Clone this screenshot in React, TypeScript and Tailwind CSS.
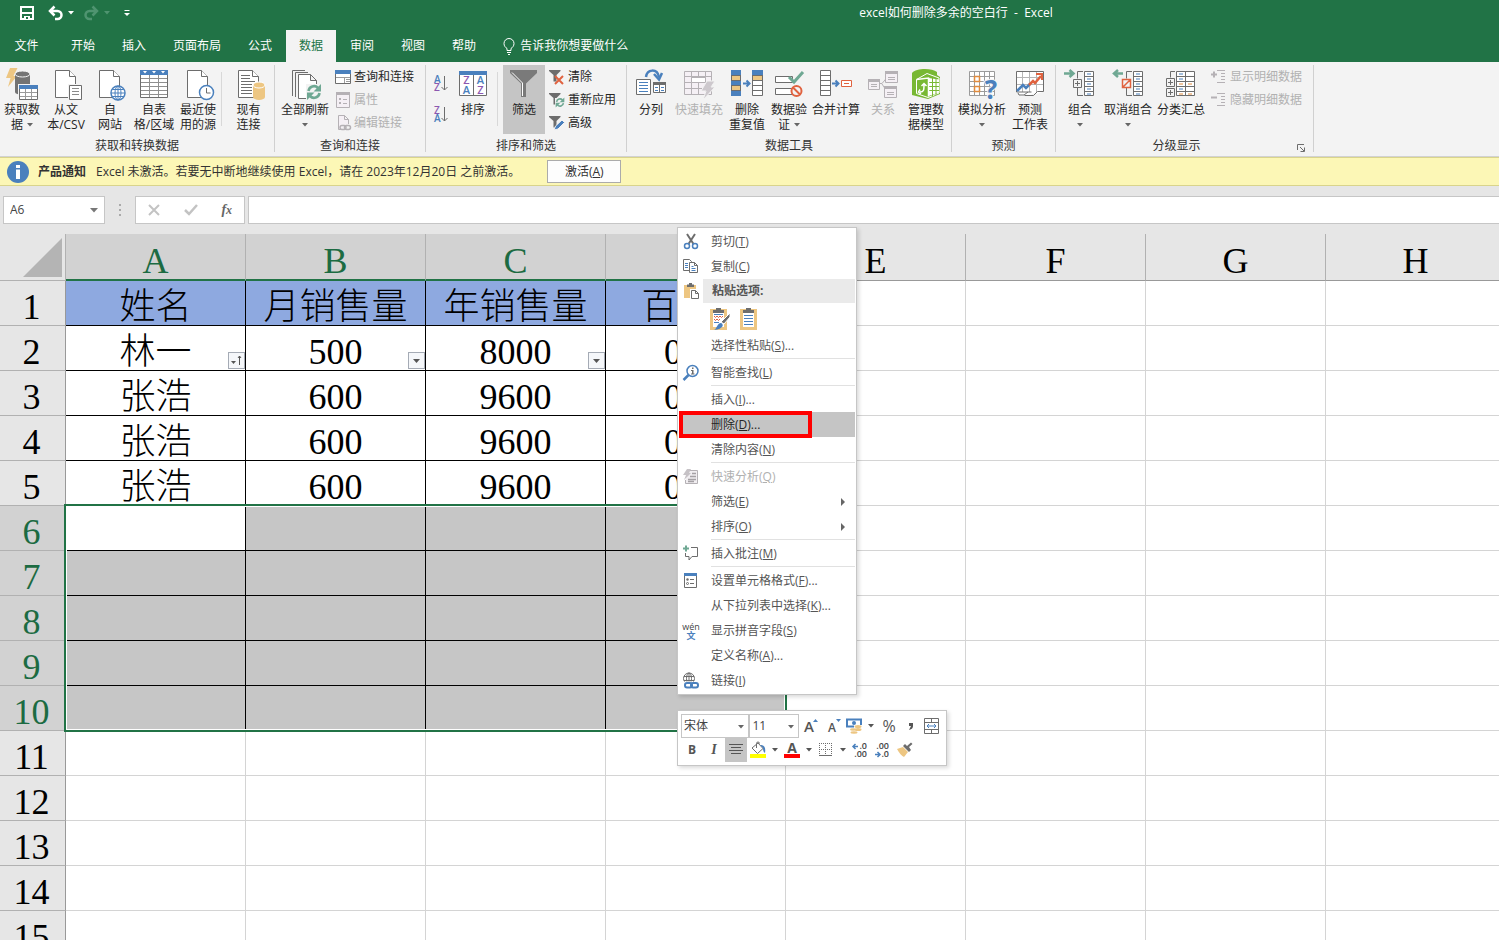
import type { ReactNode } from "react";
import clsx from "clsx";

const GRAY = "#6d6d6d";
const BLUE = "#4a80bd";
const TAN = "#edc682";
const GREEN = "#6fa893";
const RED = "#e0623f";
const PURPLE = "#8c58b0";
const DIM = "#b5b1b5";

/* ---------- icon parts ---------- */

function Svg({ w = 32, h = 32, children }: { w?: number; h?: number; children: ReactNode }) {
  return (
    <svg width={w} height={h} viewBox={`0 0 ${w} ${h}`} fill="none" aria-hidden="true" className="shrink-0 overflow-visible">
      {children}
    </svg>
  );
}

function Page({ x = 5, y = 2 }: { x?: number; y?: number }) {
  return (
    <g transform={`translate(${x} ${y})`} stroke={GRAY} fill="#fff">
      <path d="M.5.5h14l6 6v21H.5z" />
      <path d="M14.5.5v6h6" />
    </g>
  );
}

function Lines({ x, w, ys, color = GRAY }: { x: number; w: number; ys: number[]; color?: string }) {
  return <path d={ys.map((y) => `M${x} ${y + 0.5}h${w}`).join("")} stroke={color} />;
}

function Cylinder({ x, y, w, h, fill, top }: { x: number; y: number; w: number; h: number; fill: string; top: string }) {
  const r = w / 2;
  return (
    <g>
      <path d={`M${x} ${y + 3}v${h - 6}a${r} 3 0 0 0 ${w} 0v${6 - h}z`} fill={fill} />
      <ellipse cx={x + r} cy={y + 3} rx={r} ry="3" fill={fill} stroke={top} />
    </g>
  );
}

function Refresh({ x, y, s = 1 }: { x: number; y: number; s?: number }) {
  return (
    <g transform={`translate(${x} ${y}) scale(${s})`}>
      <path d="M-5.500-1A5.500 5.500 0 0 1 4-4M5.500 1A5.500 5.500 0 0 1-4 4" stroke={GREEN} strokeWidth="2.600" />
      <path d="M7-8v7.500H-.5zM-7 8V.5H.5z" fill={GREEN} />
    </g>
  );
}

function Funnel() {
  return <path d="M0 1h11.500v1L7.500 6v6.500h-3V6L0 2z" fill={GRAY} />;
}

function Caret({ className }: { className?: string }) {
  return (
    <svg width="6" height="4" viewBox="0 0 6 4" aria-hidden="true" className={clsx("shrink-0", className)}>
      <path d="M0 0h6L3 3.500z" fill="currentColor" />
    </svg>
  );
}

const letter = { fontFamily: "Open Sans, sans-serif", fontWeight: 700 };
const plain = { fontFamily: "Open Sans, sans-serif", fontWeight: 600 };

/* ---------- ribbon icons ---------- */

const icons = {
  fetch: (
    <Svg>
      <path d="M4 0h7.500L7.500 8h3.500L2 19l2.500-9H0z" fill={TAN} />
      <Cylinder x={9} y={3} w={15} h={24} fill="#737373" top="#f3f3f3" />
      <path d="M12 16h20v16H12z" fill="#f3f3f3" />
      <path d="M13.500 17.500h18v14h-18z" fill="#fff" stroke={GRAY} />
      <path d="M13 17h19v4H13z" fill={BLUE} />
      <path d="M19.500 21v10M25.500 21v10M14 24.500h17M14 28.500h17" stroke="#9a9a9a" />
    </Svg>
  ),
  csv: (
    <Svg>
      <Page />
      <path d="M18 16h14v16H18z" fill="#f3f3f3" />
      <path d="M19.500 17.500h12v14h-12z" fill="#fff" stroke={GRAY} />
      <Lines x={22} w={7} ys={[20, 23, 26]} color="#8a8a8a" />
    </Svg>
  ),
  web: (
    <Svg>
      <Page />
      <circle cx="24" cy="25" r="7" fill="#fff" stroke={BLUE} strokeWidth="1.500" />
      <ellipse cx="24" cy="25" rx="3" ry="7" stroke={BLUE} />
      <path d="M24 18v14M17 25h14M18.500 21.500h11M18.500 28.500h11" stroke={BLUE} />
    </Svg>
  ),
  table: (
    <Svg>
      <path d="M2.500 2.500h27v27h-27z" fill="#fff" stroke={GRAY} />
      <path d="M2 2h28v5H2z" fill={BLUE} />
      <path d="M5 3h4l-2 2.500zM14 3h4l-2 2.500zM23 3h4l-2 2.500z" fill="#fff" />
      <path d="M11.500 7v22M20.500 7v22M3 10.500h26M3 14.500h26M3 18.500h26M3 22.500h26M3 26.500h26" stroke="#8f8f8f" />
    </Svg>
  ),
  recent: (
    <Svg>
      <Page />
      <circle cx="24.500" cy="24.500" r="7" fill="#fff" stroke={BLUE} strokeWidth="1.500" />
      <path d="M24.500 20v5h4" stroke={GRAY} />
    </Svg>
  ),
  existing: (
    <Svg>
      <Page />
      <Lines x={8} w={9} ys={[7, 10]} />
      <Lines x={8} w={14} ys={[13]} />
      <Lines x={8} w={11} ys={[16, 19, 22, 25]} />
      <Cylinder x={20} y={14} w={12} h={18} fill={TAN} top="#fff" />
    </Svg>
  ),
  refreshAll: (
    <Svg>
      <path d="M3.500 28V2.500H16M6.500 29V4.500H19" stroke={GRAY} />
      <path d="M9.500 30.500v-24h12l6 6v18zM21.500 6.500v6h6" fill="#fff" stroke={GRAY} />
      <path d="M17 16h13v15H17z" fill="#f3f3f3" />
      <Refresh x={25} y={24} />
    </Svg>
  ),
  sort: (
    <Svg>
      <path d="M2.500 3.500h27v24h-27z" fill="#fff" stroke={GRAY} />
      <path d="M2 3h28v4H2z" fill={BLUE} />
      <path d="M16.500 7v21" stroke={GRAY} />
      <g fontSize="11" textAnchor="middle" style={plain}>
        <text x="9.500" y="16" fill={PURPLE}>Z</text>
        <text x="9.500" y="26" fill={BLUE}>A</text>
        <text x="23.500" y="16" fill={BLUE}>A</text>
        <text x="23.500" y="26" fill={PURPLE}>Z</text>
      </g>
    </Svg>
  ),
  filter: (
    <Svg>
      <path d="M2 2h27v3L18 15.500V29h-5V15.500L2 5z" fill="#7a7a7a" />
      <path d="M4 4.500L14.500 15v13" stroke="#fff" />
    </Svg>
  ),
  columns: (
    <Svg>
      <path d="M11 9C12 1 22 0 24 9" stroke={BLUE} strokeWidth="2.500" />
      <path d="M19 6l5 5.500L27 5" stroke={BLUE} strokeWidth="2.500" />
      <path d="M1.500 11.500h14v15h-14z" fill="#fff" stroke={GRAY} />
      <Lines x={4} w={9} ys={[14, 17, 20, 23]} color={BLUE} />
      <path d="M18.500 14.500h12v10h-12z" fill="#fff" stroke={GRAY} />
      <path d="M18 14h13v3H18z" fill={GRAY} />
      <path d="M24.500 17v8" stroke={GRAY} />
      <path d="M20 19.500h3M20 22.500h3M26 19.500h3M26 22.500h3" stroke={BLUE} />
    </Svg>
  ),
  flash: (
    <Svg>
      <path d="M1.500 3.500h27v23h-27z" fill="#f5f0f5" stroke={DIM} />
      <path d="M8.500 4v22M22.500 4v22M2 8.500h26M2 14.500h26M2 20.500h26M15.500 4v4M15.500 15v11" stroke={DIM} />
      <path d="M8.500 9.500h14v5h-14z" fill="#fff" stroke={DIM} />
      <path d="M24 13h8l-4 6h4L20 32l3-9h-5z" fill="#cdc8cd" stroke="#f3f3f3" />
    </Svg>
  ),
  dedupe: (
    <Svg>
      <path d="M.5 2.500h9v25h-9zM21.500 2.500h10v25h-10z" fill="#fff" stroke={GRAY} />
      <path d="M0 2h10v5H0zM0 12h10v5H0zM0 22h10v6H0zM21 2h11v5H21z" fill={BLUE} />
      <path d="M1 7h8v5H1zM1 17h8v5H1zM22 7h9v5h-9z" fill={TAN} />
      <path d="M0 7.500h10M0 12.500h10M0 17.500h10M0 22.500h10M21 7.500h11M21 12.500h11M21 17.500h11M21 22.500h11" stroke={GRAY} />
      <path d="M12 15.500h6M15.500 12.500l3 3-3 3" stroke={BLUE} strokeWidth="2" />
    </Svg>
  ),
  validate: (
    <Svg>
      <path d="M2.500 8.500h17v6h-17zM2.500 20.500h17v6h-17z" fill="#fff" stroke={GRAY} />
      <path d="M16 9l5 5 9-10" stroke={GREEN} strokeWidth="3" />
      <circle cx="23.500" cy="23" r="5" fill="#f3f3f3" stroke={RED} strokeWidth="2" />
      <path d="M20 19.500l7 7" stroke={RED} strokeWidth="2" />
    </Svg>
  ),
  consolidate: (
    <Svg>
      <path d="M.5 2.500h10v25H.5zM.5 7.500h10M.5 12.500h10M.5 17.500h10M.5 22.500h10" fill="#fff" stroke={GRAY} />
      <path d="M12 15.500h6M15.500 12.500l3 3-3 3" stroke={BLUE} strokeWidth="2" />
      <path d="M21.500 12.500h10v6h-10z" fill="#fff" stroke={RED} />
      <path d="M24 15.500h5" stroke={RED} />
    </Svg>
  ),
  relations: (
    <Svg>
      <path d="M12 15.500h3l5-6M15 16l4 6h2" stroke={DIM} />
      <path d="M1.500 11.500h11v10h-11zM18.500 3.500h12v11h-12zM17.500 18.500h12v11h-12z" fill="#f5f0f5" stroke={DIM} />
      <path d="M1 11h12v3H1zM18 3h13v3H18zM17 18h13v3H17z" fill={DIM} />
      <path d="M4 16.500h6M4 18.500h6M21 9.500h7M21 11.500h7M20 24.500h7M20 26.500h7" stroke={DIM} />
    </Svg>
  ),
  model: (
    <Svg>
      <path d="M2 5C6 0 22 0 27 4v3l3 2v17l-12 5L2 27z" fill="#78b833" />
      <path d="M6.500 11.500L17 5.500l12 4.500v15l-11 4.500-11.500-4z" stroke="#fff" />
      <path d="M18.500 10l10.500 1.500v13L18.500 28z" fill="#fff" />
      <path d="M19 14.500h10M19 18.500h10M19 22.500h10M22.500 10v18M26 11v16" stroke="#78b833" />
      <path d="M6.500 11.500l12-1.500v18.500M10 24c4 0 4-2 4-8M11.500 18l2.500-2.500 2.500 2.500M10 21.500L8.500 24l2.500 2" stroke="#fff" strokeWidth="1.500" />
    </Svg>
  ),
  whatIf: (
    <Svg>
      <path d="M3.500 3.500h25v24h-25zM8.500 3v24M13.500 3v24M18.500 3v24M23.500 3v24M3 8.500h25M3 13.500h25M3 18.500h25M3 23.500h25" fill="#fff" stroke="#9b9b9b" />
      <path d="M8.500 8.500h5v5h-5zM8.500 18.500h5v5h-5z" fill="#fff" stroke="#e08b3e" strokeWidth="1.500" />
      <text x="25" y="31" fontSize="26" textAnchor="middle" fill={BLUE} stroke="#f3f3f3" strokeWidth="2" paintOrder="stroke" style={letter}>?</text>
    </Svg>
  ),
  forecast: (
    <Svg>
      <path d="M2.500 3.500h27v20l-5 2h-5l-4 2h-4l-4 1-5-4z" fill="#fff" />
      <path d="M8.500 4v20M15.500 4v20M22.500 4v20M3 9.500h26M3 16.500h26" stroke="#b5b5b5" />
      <path d="M2.500 24V3.500h27v20h-6l-4 4h-9M2.500 24h15M4 25l1 2h5l4-3" stroke={GRAY} />
      <path d="M3 23l6-6 3 3 4-4" stroke={BLUE} strokeWidth="2.500" />
      <path d="M15 17l4-4 2 2 6-7" stroke={RED} strokeWidth="2.500" />
      <path d="M22 6h6v6" stroke={RED} strokeWidth="2" />
    </Svg>
  ),
  group: (
    <Svg>
      <path d="M0 5.500h8M5.500 2l4 3.500-4 3.500" stroke={GREEN} strokeWidth="2.500" />
      <path d="M20.500 3.500h9v24h-9zM20 8.500h10M20 13.500h10M20 18.500h10M20 23.500h10" fill="#fff" stroke={GRAY} />
      <path d="M19 3.500h-5.500v7M13.500 20v7.500H19M9.500 11.500h8v8h-8zM11 15.500h5M13.500 13v5" stroke={GRAY} />
      <path d="M23 6h4M23 11h4M23 16h4M23 21h4M23 26h4" stroke={BLUE} />
    </Svg>
  ),
  ungroup: (
    <Svg>
      <path d="M11 5.500H3M6 2L2 5.500 6 9" stroke={GREEN} strokeWidth="2.500" />
      <path d="M21.500 3.500h9v24h-9zM21 8.500h10M21 13.500h10M21 18.500h10M21 23.500h10" fill="#fff" stroke={GRAY} />
      <path d="M20 3.500h-5.500v7M14.500 20v7.500H20" stroke={GRAY} />
      <path d="M10.500 11.500h8v8h-8zM11 19l7-7" stroke={RED} strokeWidth="1.500" />
      <path d="M24 6h4M24 11h4M24 16h4M24 21h4M24 26h4" stroke={BLUE} />
    </Svg>
  ),
  subtotal: (
    <Svg>
      <path d="M11.500 3.500h18v24h-18zM20.500 4v23M12 8.500h17M12 13.500h17M12 18.500h17M12 23.500h17" fill="#fff" stroke={GRAY} />
      <path d="M10 3.500H5.500v6M1.500 10.500h8v8h-8zM1.500 20.500h8v8h-8zM3 14.500h5M5.500 12v5M3 24.500h5M5.500 22v5" stroke={GRAY} />
      <path d="M14 6h4M14 11h4M14 21h4" stroke={BLUE} />
      <path d="M14 16h4M23 16h4M14 26h4M23 26h4" stroke="#e08b3e" />
    </Svg>
  ),
};

const small = {
  queries: (
    <Svg w={16} h={16}>
      <path d="M.5 1.500h15v13H.5z" fill="#fff" stroke={GRAY} />
      <path d="M0 1h16v4H0z" fill={BLUE} />
      <path d="M9.500 8v6M1 8.500h14M11 10.500h4M11 12.500h4" stroke="#9c9c9c" />
    </Svg>
  ),
  props: (
    <Svg w={16} h={16}>
      <path d="M1.500.5h13v15h-13z" fill="#f5f0f5" stroke={DIM} />
      <path d="M1 0h14v3H1z" fill={DIM} />
      <path d="M4 6h2v2H4zM4 10h2v2H4z" fill={DIM} />
      <path d="M8 7.500h4M8 11.500h4" stroke={DIM} />
    </Svg>
  ),
  links: (
    <Svg w={16} h={16}>
      <path d="M7 14.500H3.500V.5h6l4 4V9M9.500.5v4h4" fill="#f5f0f5" stroke={DIM} />
      <rect x="5" y="10.500" width="6" height="4" rx="2" stroke={DIM} strokeWidth="1.500" />
      <rect x="9.500" y="10.500" width="6" height="4" rx="2" stroke={DIM} strokeWidth="1.500" />
    </Svg>
  ),
  clear: (
    <Svg w={16} h={16}>
      <Funnel />
      <path d="M6 7l8 8M14 7l-8 8" stroke={RED} strokeWidth="2" />
    </Svg>
  ),
  reapply: (
    <Svg w={16} h={16}>
      <Funnel />
      <path d="M6 6h10v10H6z" fill="#f3f3f3" />
      <Refresh x={11} y={10.5} s={0.62} />
    </Svg>
  ),
  advanced: (
    <Svg w={16} h={16}>
      <Funnel />
      <path d="M5 15l1.500-4L13 5l2.500 2.500L9 14z" fill={BLUE} stroke="#f3f3f3" />
    </Svg>
  ),
  showDetail: (
    <Svg w={16} h={16}>
      <path d="M0 5.500h6M3 2.500v6" stroke={DIM} strokeWidth="2" />
      <path d="M6 1.500h8M10 4.500h4M10 7.500h4M10 10.500h4M6 13.500h8" stroke={DIM} />
    </Svg>
  ),
  hideDetail: (
    <Svg w={16} h={16}>
      <path d="M0 5.500h6" stroke={DIM} strokeWidth="2" />
      <path d="M6 1.500h8M10 4.500h4M10 7.500h4M10 10.500h4M6 13.500h8" stroke={DIM} />
    </Svg>
  ),
};

/* ---------- ribbon ---------- */

function BigButton(props: {
  icon: ReactNode;
  lines: string[];
  width: string;
  caret?: boolean;
  disabled?: boolean;
  active?: boolean;
}) {
  const { icon, lines, width, caret, disabled, active } = props;
  return (
    <button
      type="button"
      disabled={disabled}
      aria-pressed={active}
      className={clsx(
        "flex h-[69px] shrink-0 flex-col items-center pt-[3px] leading-[15px] whitespace-nowrap",
        width,
        disabled ? "text-[#b1b1b1]" : "text-[#262626]",
        active && "bg-[#c5c5c5]"
      )}
    >
      {icon}
      <span className="mt-[2px]">{lines[0]}</span>
      {(lines[1] || caret) && (
        <span className="flex h-[15px] items-center">
          {lines[1]}
          {caret && <Caret className={lines[1] ? "ml-1 text-[#666]" : "text-[#666]"} />}
        </span>
      )}
    </button>
  );
}

function SmallButton({ icon, label, disabled }: { icon: ReactNode; label: string; disabled?: boolean }) {
  return (
    <button
      type="button"
      disabled={disabled}
      className={clsx(
        "flex h-[23px] items-center gap-[3px] whitespace-nowrap",
        disabled ? "text-[#b1b1b1]" : "text-[#262626]"
      )}
    >
      {icon}
      {label}
    </button>
  );
}

function Group(props: { label: string; width: string; pad?: string; launcher?: boolean; children: ReactNode }) {
  const { label, width, pad, launcher, children } = props;
  return (
    <div className={clsx("mt-[3px] mb-1 flex shrink-0 flex-col border-r border-[#d0d0d0]", width)}>
      <div className={clsx("flex h-[69px] shrink-0", pad)}>{children}</div>
      <div className="mt-[3px] flex h-[18px] shrink-0 items-center text-[#333]">
        <span className="flex-1 text-center">{label}</span>
        {launcher && (
          <button type="button" aria-label="分级显示设置" className="mt-1 w-4">
            <Svg w={8} h={8}>
              <path d="M.5 6V.5H7M3 3l4 4M7.500 3.500v4h-4" stroke={GRAY} />
            </Svg>
          </button>
        )}
      </div>
    </div>
  );
}

function Divider() {
  return <div className="mx-px mt-[7px] h-[54px] w-px shrink-0 bg-[#d8d8d8]" />;
}

function SortButton({ top, bottom, label }: { top: string; bottom: string; label: string }) {
  return (
    <button type="button" aria-label={label} className="h-[17px]">
      <Svg w={16} h={17}>
        <g fontSize="10" style={plain}>
          <text x="0" y="8" fill={top === "A" ? BLUE : PURPLE}>{top}</text>
          <text x="0" y="16" fill={bottom === "A" ? BLUE : PURPLE}>{bottom}</text>
        </g>
        <path d="M10.500 1v14M7.500 12l3 3 3-3" stroke={GRAY} />
      </Svg>
    </button>
  );
}

function Ribbon() {
  return (
    <div className="flex h-[95px] shrink-0 overflow-hidden border-b border-[#d2d2d2] bg-[#f3f3f3]">
      <Group label="获取和转换数据" width="w-[275px]">
        <BigButton icon={icons.fetch} lines={["获取数", "据"]} width="w-11" caret />
        <BigButton icon={icons.csv} lines={["从文", "本/CSV"]} width="w-11" />
        <BigButton icon={icons.web} lines={["自", "网站"]} width="w-11" />
        <BigButton icon={icons.table} lines={["自表", "格/区域"]} width="w-11" />
        <BigButton icon={icons.recent} lines={["最近使", "用的源"]} width="w-11" />
        <Divider />
        <BigButton icon={icons.existing} lines={["现有", "连接"]} width="w-[51px]" />
      </Group>
      <Group label="查询和连接" width="w-[151px]" pad="pl-1">
        <BigButton icon={icons.refreshAll} lines={["全部刷新"]} width="w-[52px]" caret />
        <div className="ml-1">
          <SmallButton icon={small.queries} label="查询和连接" />
          <SmallButton icon={small.props} label="属性" disabled />
          <SmallButton icon={small.links} label="编辑链接" disabled />
        </div>
      </Group>
      <Group label="排序和筛选" width="w-[201px]" pad="pl-2">
        <div className="flex flex-col gap-[14px] pt-[10px]">
          <SortButton top="A" bottom="Z" label="升序" />
          <SortButton top="Z" bottom="A" label="降序" />
        </div>
        <BigButton icon={icons.sort} lines={["排序"]} width="w-[46px]" />
        <Divider />
        <div className="mx-1">
          <BigButton icon={icons.filter} lines={["筛选"]} width="w-[42px]" active />
        </div>
        <div>
          <SmallButton icon={small.clear} label="清除" />
          <SmallButton icon={small.reapply} label="重新应用" />
          <SmallButton icon={small.advanced} label="高级" />
        </div>
      </Group>
      <Group label="数据工具" width="w-[325px]" pad="pl-[2px]">
        <BigButton icon={icons.columns} lines={["分列"]} width="w-11" />
        <BigButton icon={icons.flash} lines={["快速填充"]} width="w-[52px]" disabled />
        <BigButton icon={icons.dedupe} lines={["删除", "重复值"]} width="w-11" />
        <BigButton icon={icons.validate} lines={["数据验", "证"]} width="w-10" caret />
        <BigButton icon={icons.consolidate} lines={["合并计算"]} width="w-[54px]" />
        <BigButton icon={icons.relations} lines={["关系"]} width="w-10" disabled />
        <BigButton icon={icons.model} lines={["管理数", "据模型"]} width="w-[46px]" />
      </Group>
      <Group label="预测" width="w-[104px]" pad="pl-1">
        <BigButton icon={icons.whatIf} lines={["模拟分析"]} width="w-[52px]" caret />
        <BigButton icon={icons.forecast} lines={["预测", "工作表"]} width="w-11" />
      </Group>
      <Group label="分级显示" width="w-[258px]" pad="pl-px" launcher>
        <BigButton icon={icons.group} lines={["组合"]} width="w-[46px]" caret />
        <BigButton icon={icons.ungroup} lines={["取消组合"]} width="w-[50px]" caret />
        <BigButton icon={icons.subtotal} lines={["分类汇总"]} width="w-[56px]" />
        <div className="ml-[2px]">
          <SmallButton icon={small.showDetail} label="显示明细数据" disabled />
          <SmallButton icon={small.hideDetail} label="隐藏明细数据" disabled />
        </div>
      </Group>
    </div>
  );
}

/* ---------- title bar and tabs ---------- */

const tabs = ["开始", "插入", "页面布局", "公式", "数据", "审阅", "视图", "帮助"];

function TitleBar() {
  return (
    <header className="shrink-0 bg-[#217346] text-white">
      <div className="flex h-[30px] items-center pb-1">
        <div className="flex w-[413px] items-center pl-5">
          <button type="button" aria-label="保存">
            <Svg w={14} h={14}>
              <path d="M1 1h12v12H1zM1 7h12" stroke="#fff" strokeWidth="2" />
              <path d="M4 10h6v3H4z" fill="#fff" />
              <path d="M6 11h2v2H6z" fill="#217346" />
            </Svg>
          </button>
          <button type="button" aria-label="撤消" className="ml-[14px] flex items-center gap-[5px]">
            <Svg w={15} h={14}>
              <path d="M2 5h7.500a4 4 0 0 1 0 8H7M6.500.5L2 5l4.500 4.500" stroke="#fff" strokeWidth="2.500" />
            </Svg>
            <Caret />
          </button>
          <button type="button" aria-label="恢复" disabled className="ml-[10px] flex items-center gap-[5px] text-[#4f9470]">
            <Svg w={15} h={14}>
              <path d="M13 5H5.500a4 4 0 0 0 0 8H8M8.500.5L13 5 8.500 9.500" stroke="#4f9470" strokeWidth="2.500" />
            </Svg>
            <Caret />
          </button>
          <button type="button" aria-label="自定义快速访问工具栏" className="ml-[14px]">
            <Svg w={6} h={8}>
              <path d="M.5 1.500h5" stroke="#fff" />
              <path d="M0 4h6L3 7z" fill="#fff" />
            </Svg>
          </button>
        </div>
        <h1 className="flex-1 text-center whitespace-pre">excel如何删除多余的空白行  -  Excel</h1>
      </div>
      <nav className="flex h-8 gap-px">
        <button type="button" className="w-[57px] pr-1">文件</button>
        {tabs.map((tab) => (
          <button
            key={tab}
            type="button"
            className={clsx("px-[13px]", tab === "数据" && "bg-[#f3f3f3] text-[#217346]")}
          >
            {tab}
          </button>
        ))}
        <button type="button" className="ml-3 flex items-center gap-1">
          <Svg w={14} h={17}>
            <path d="M5 12.500V10.500C3.500 9.500 2 8 2 5.500a5 5 0 0 1 10 0C12 8 10.500 9.500 9 10.500v2zM5 14.500h4M6 16.500h2" stroke="#fff" />
          </Svg>
          告诉我你想要做什么
        </button>
      </nav>
    </header>
  );
}

function NoticeBar() {
  return (
    <div className="flex h-[29px] shrink-0 items-center border-y border-[#d9d48c] bg-[#fcf7b6] pl-[7px] text-[#333]">
      <Svg w={22} h={22}>
        <circle cx="11" cy="11" r="11" fill={BLUE} />
        <path d="M9 4h4v3H9zM9 8.500h4V18H9z" fill="#fff" />
      </Svg>
      <strong className="ml-[9px]">产品通知</strong>
      <span className="ml-[10px]">Excel 未激活。若要无中断地继续使用 Excel，请在 2023年12月20日 之前激活。</span>
      <button type="button" className="ml-[27px] h-[23px] w-[74px] border border-[#ababab] bg-[#fdfdfd]">
        激活(<u>A</u>)
      </button>
    </div>
  );
}

function FormulaBar() {
  return (
    <div className="flex h-12 shrink-0 items-center bg-[#e6e6e6] pl-[3px]">
      <div className="flex h-7 w-[102px] items-center border border-[#c6c6c6] bg-white">
        <input aria-label="名称框" defaultValue="A6" className="w-20 pl-[6px] text-[#444] outline-none" />
        <button type="button" aria-label="选择名称" className="flex w-5 justify-center text-[#777]">
          <Svg w={8} h={5}>
            <path d="M0 0h8L4 4.500z" fill="#777" />
          </Svg>
        </button>
      </div>
      <Svg w={30} h={12}>
        <path d="M14 0h2v2h-2zM14 5h2v2h-2zM14 10h2v2h-2z" fill="#aaa" />
      </Svg>
      <div className="flex h-7 w-[110px] items-center justify-around border border-[#c6c6c6] bg-white">
        <button type="button" aria-label="取消">
          <Svg w={12} h={12}>
            <path d="M1 1l10 10M11 1L1 11" stroke="#c3c3c3" strokeWidth="2" />
          </Svg>
        </button>
        <button type="button" aria-label="输入">
          <Svg w={14} h={12}>
            <path d="M1 6l4 4 8-9" stroke="#c3c3c3" strokeWidth="2.500" />
          </Svg>
        </button>
        <button
          type="button"
          aria-label="插入函数"
          className="font-['Liberation_Serif',serif] text-sm leading-4 font-bold text-[#666] italic"
        >
          f<span className="text-xs">x</span>
        </button>
      </div>
      <input aria-label="编辑栏" className="ml-[3px] h-7 flex-1 border border-r-0 border-[#c6c6c6] bg-white px-2 outline-none" />
    </div>
  );
}

/* ---------- sheet ---------- */

const columns = ["A", "B", "C", "D", "E", "F", "G", "H"];

const cells: string[][] = [
  ["姓名", "月销售量", "年销售量", "百分比"],
  ["林一", "500", "8000", "0.05"],
  ["张浩", "600", "9600", "0.06"],
  ["张浩", "600", "9600", "0.06"],
  ["张浩", "600", "9600", "0.06"],
];

function FilterButton({ sorted }: { sorted: boolean }) {
  return (
    <button
      type="button"
      aria-label="筛选"
      className="absolute right-0 bottom-px flex size-[17px] items-center justify-center border border-[#a5abb5] bg-[#f5f7fa]"
    >
      {sorted ? (
        <Svg w={11} h={11}>
          <path d="M0 6h5L2.500 9z" fill="#555" />
          <path d="M8.500 10V1M7 3l1.500-2L10 3" stroke="#555" />
        </Svg>
      ) : (
        <Svg w={7} h={4}>
          <path d="M0 0h7L3.500 4z" fill="#555" />
        </Svg>
      )}
    </button>
  );
}

function Sheet() {
  return (
    <main className="relative min-h-0 flex-1 overflow-hidden bg-white font-['Liberation_Serif','Noto_Sans_CJK_SC',serif] text-4xl leading-9 font-light text-black">
      <table className="w-[1506px] table-fixed border-separate border-spacing-0">
        <thead>
          <tr className="h-[47px]">
            <th className="w-[66px] border-r border-b border-[#b1b1b1] bg-[#e6e6e6] p-0">
              <svg width="40" height="40" viewBox="0 0 40 40" aria-hidden="true" className="mt-px ml-[22px]">
                <path d="M40 0v39H1z" fill="#b4b4b4" />
              </svg>
            </th>
            {columns.map((col, i) => (
              <th
                key={col}
                className={clsx(
                  "border-r border-r-[#b1b1b1] p-0 pt-2 font-normal",
                  i < 4
                    ? "border-b-2 border-b-[#217346] bg-[#d2d2d2] text-[#1c6b42]"
                    : "border-b border-b-[#999] bg-[#e6e6e6]"
                )}
              >
                {col}
              </th>
            ))}
          </tr>
        </thead>
        <tbody>
          {Array.from({ length: 15 }, (_, r) => (
            <tr key={r} className="h-[45px]">
              <th
                className={clsx(
                  "border-r border-b border-r-[#999] border-b-[#b1b1b1] p-0 pt-[7px] pr-[2px] font-normal",
                  r >= 5 && r < 10 ? "bg-[#d2d2d2] text-[#1c6b42]" : "bg-[#e6e6e6]"
                )}
              >
                {r + 1}
              </th>
              {columns.map((col, c) => (
                <td
                  key={col}
                  className={clsx(
                    "relative border-r border-b p-0 pt-[7px] text-center whitespace-nowrap",
                    r < 10 && c < 4 ? "border-black" : "border-[#d4d4d4]",
                    r === 0 && c < 4 && "bg-[#8ea9e0]",
                    r >= 5 && r < 10 && c < 4 && !(r === 5 && c === 0) && "bg-[#c6c6c6]"
                  )}
                >
                  {cells[r]?.[c]}
                  {r === 1 && c < 4 && <FilterButton sorted={c === 0} />}
                </td>
              ))}
            </tr>
          ))}
        </tbody>
      </table>
      {/* selection outline A6:D10 */}
      <div className="pointer-events-none absolute top-[270px] left-16 h-[228px] w-[723px] border-2 border-[#217346] inset-ring inset-ring-white" />
    </main>
  );
}

/* ---------- context menu ---------- */

const menuIcons = {
  cut: (
    <Svg w={16} h={16}>
      <path d="M4 0l6.500 10M12 0L5.500 10" stroke={GRAY} strokeWidth="2" />
      <circle cx="4" cy="12" r="2.500" stroke={BLUE} strokeWidth="1.500" />
      <circle cx="12" cy="12" r="2.500" stroke={BLUE} strokeWidth="1.500" />
    </Svg>
  ),
  copy: (
    <Svg w={16} h={16}>
      <path d="M.5.5h6l2 2v9h-8z" fill="#fff" stroke={GRAY} />
      <path d="M6.500 3.500h5l3 3v7h-8zM11.500 3.500v3h3" fill="#fff" stroke={GRAY} />
      <path d="M2 4.500h3M2 6.500h3M2 8.500h3M8.500 7.500h2M8.500 9.500h4M8.500 11.500h4" stroke={BLUE} />
    </Svg>
  ),
  paste: (
    <Svg w={16} h={16}>
      <path d="M1 2h12v13H1z" fill={TAN} />
      <path d="M4 1.500h2V0h3v1.500h2V4H4z" fill={GRAY} />
      <path d="M7 6h9v10H7z" fill="#fff" />
      <path d="M8.500 7.500h4l3 3v5h-7zM12.500 7.500v3h3" fill="#fff" stroke={GRAY} />
    </Svg>
  ),
  lookup: (
    <Svg w={16} h={16}>
      <circle cx="9.500" cy="6" r="5.500" stroke={BLUE} strokeWidth="1.500" />
      <path d="M5.500 10L.5 15" stroke={BLUE} strokeWidth="2.500" />
      <path d="M9 2.500h1.500V4H9zM8 5h2.500v3.500h1v1H8v-1h1V6H8z" fill={GRAY} />
    </Svg>
  ),
  analyze: (
    <Svg w={16} h={16}>
      <path d="M6 1.500h8.500v13h-12V11" fill="#f1eef1" stroke={DIM} />
      <path d="M4 0h4L6 4h2L1 11l2-5H0z" fill="#c6c2c6" />
      <path d="M9 4.500h4M7 7.500h6M5 10.500h8M5 12.500h6" stroke="#a5a1a5" strokeWidth="1.500" />
    </Svg>
  ),
  comment: (
    <Svg w={16} h={16}>
      <path d="M0 2.500h6M3-.5v6" stroke={GREEN} strokeWidth="2" />
      <path d="M8 1.500h6.500v9H9l-3 3.500v-3.500H2.500V7" stroke={GRAY} />
    </Svg>
  ),
  format: (
    <Svg w={16} h={16}>
      <path d="M1.500.5h12v14h-12z" fill="#fff" stroke={GRAY} />
      <path d="M1 0h13v3H1z" fill={BLUE} />
      <circle cx="4.500" cy="6.500" r="1.200" fill={GRAY} />
      <circle cx="4.500" cy="10.500" r="1" stroke={GRAY} />
      <path d="M7 6.500h4M7 10.500h4" stroke={GRAY} />
    </Svg>
  ),
  pinyin: (
    <Svg w={16} h={18}>
      <text x="8" y="8" fontSize="9" textAnchor="middle" fill="#444" style={{ fontFamily: "Open Sans, sans-serif" }}>wén</text>
      <text x="8" y="17" fontSize="9" fontWeight="700" textAnchor="middle" fill={BLUE} style={{ fontFamily: "Noto Sans CJK SC, sans-serif" }}>文</text>
    </Svg>
  ),
  link: (
    <Svg w={16} h={16}>
      <circle cx="6" cy="5.500" r="5.500" stroke={GRAY} />
      <ellipse cx="6" cy="5.500" rx="2.500" ry="5.500" stroke={GRAY} />
      <path d="M1 3.500h10M1 7.500h10M6 .5v10" stroke={GRAY} />
      <path d="M1 8.500h15V15H1z" fill="#fff" />
      <rect x="2" y="10" width="7" height="4.500" rx="2" stroke={BLUE} strokeWidth="2" />
      <rect x="8" y="10" width="7" height="4.500" rx="2" stroke={BLUE} strokeWidth="2" />
    </Svg>
  ),
};

function MenuItem(props: {
  label: string;
  hotkey: string;
  dots?: boolean;
  icon?: ReactNode;
  disabled?: boolean;
  submenu?: boolean;
  marked?: boolean;
}) {
  const { label, hotkey, dots, icon, disabled, submenu, marked } = props;
  return (
    <button
      type="button"
      role="menuitem"
      disabled={disabled}
      className={clsx(
        "relative flex h-[25px] w-full items-center whitespace-nowrap",
        disabled ? "text-[#b1b1b1]" : marked ? "text-[#262626]" : "text-[#555]",
        marked && "bg-[#c5c5c5]"
      )}
    >
      <span className="flex w-8 shrink-0 pl-1">{icon}</span>
      <span>
        {label}(<u>{hotkey}</u>){dots && "..."}
      </span>
      {submenu && (
        <svg width="4" height="8" viewBox="0 0 4 8" aria-hidden="true" className="mr-[10px] ml-auto">
          <path d="M0 0v8l4-4z" fill="#666" />
        </svg>
      )}
      {marked && <span className="pointer-events-none absolute -inset-y-px left-0 w-[133px] border-4 border-[#ff0000]" />}
    </button>
  );
}

function MenuLine() {
  return <div className="ml-8 h-[2px] border-t border-[#e1e1e1]" />;
}

function ContextMenu() {
  return (
    <div
      role="menu"
      className="absolute top-[227px] left-[677px] w-[180px] border border-[#c6c6c6] bg-white p-px shadow-[2px_2px_4px_rgba(0,0,0,0.15)]"
    >
      <MenuItem label="剪切" hotkey="T" icon={menuIcons.cut} />
      <MenuItem label="复制" hotkey="C" icon={menuIcons.copy} />
      <div className="flex h-[25px] items-start">
        <span className="w-6 shrink-0 pt-1 pl-1">{menuIcons.paste}</span>
        <strong className="h-6 flex-1 bg-[#eaeaea] pl-[9px] leading-6 text-[#555]">粘贴选项:</strong>
      </div>
      <div className="flex h-[29px] items-center gap-2 pl-[30px]">
        <button type="button" aria-label="粘贴">
          <Svg w={22} h={24}>
            <path d="M2.500 3.500h14v18h-14z" stroke={TAN} strokeWidth="3" fill="#fff" />
            <path d="M4 3h3V1h5v2h3v3H4z" fill={GRAY} />
            <path d="M5 9l1.500 1.500L8 9l1.500 1.500L11 9l1.500 1.500L14 9M5 12l1.500 1.500L8 12l1.500 1.500L11 12" stroke={RED} />
            <path d="M5 7.500h9M5 15.500h5" stroke={BLUE} />
            <path d="M21 6v4l-6 7-3-2z" fill={GRAY} stroke="#fff" />
            <path d="M5 23c3-1 3-7 7-7 3 1 3 6-7 7z" fill={BLUE} />
          </Svg>
        </button>
        <button type="button" aria-label="粘贴值">
          <Svg w={20} h={24}>
            <path d="M2.500 3.500h14v18h-14z" stroke={TAN} strokeWidth="3" fill="#fff" />
            <path d="M4 3h3V1h5v2h3v3H4z" fill={GRAY} />
            <Lines x={5} w={9} ys={[8, 11, 14, 17]} color={BLUE} />
          </Svg>
        </button>
      </div>
      <MenuItem label="选择性粘贴" hotkey="S" dots />
      <MenuLine />
      <MenuItem label="智能查找" hotkey="L" icon={menuIcons.lookup} />
      <MenuLine />
      <MenuItem label="插入" hotkey="I" dots />
      <MenuItem label="删除" hotkey="D" dots marked />
      <MenuItem label="清除内容" hotkey="N" />
      <MenuLine />
      <MenuItem label="快速分析" hotkey="Q" icon={menuIcons.analyze} disabled />
      <MenuItem label="筛选" hotkey="E" submenu />
      <MenuItem label="排序" hotkey="O" submenu />
      <MenuLine />
      <MenuItem label="插入批注" hotkey="M" icon={menuIcons.comment} />
      <MenuLine />
      <MenuItem label="设置单元格格式" hotkey="F" icon={menuIcons.format} dots />
      <MenuItem label="从下拉列表中选择" hotkey="K" dots />
      <MenuItem label="显示拼音字段" hotkey="S" icon={menuIcons.pinyin} />
      <MenuItem label="定义名称" hotkey="A" dots />
      <MenuItem label="链接" hotkey="I" icon={menuIcons.link} />
    </div>
  );
}

/* ---------- mini toolbar ---------- */

function Tool({ label, width = "w-[22px]", active, children }: { label: string; width?: string; active?: boolean; children: ReactNode }) {
  return (
    <button
      type="button"
      aria-label={label}
      className={clsx("flex h-6 shrink-0 items-center justify-center text-[#555]", width, active && "bg-[#c5c5c5]")}
    >
      {children}
    </button>
  );
}

function Picker({ label, value, width }: { label: string; value: string; width: string }) {
  return (
    <div className={clsx("relative h-6 border border-[#c6c6c6]", width)}>
      <select aria-label={label} defaultValue={value} className="size-full appearance-none bg-white pl-[2px] text-[#444] outline-none">
        <option>{value}</option>
      </select>
      <Caret className="pointer-events-none absolute top-[10px] right-1 text-[#666]" />
    </div>
  );
}

function MiniToolbar() {
  return (
    <div className="absolute top-[710px] left-[677px] w-[270px] border border-[#c6c6c6] bg-white p-[3px] shadow-[2px_2px_4px_rgba(0,0,0,0.15)]">
      <div className="flex">
        <Picker label="字体" value="宋体" width="w-[69px]" />
        <Picker label="字号" value="11" width="w-[50px]" />
        <Tool label="增大字号" width="w-6">
          <Svg w={14} h={16}>
            <text x="0" y="14" fontSize="15" fill="#555" style={plain}>A</text>
            <path d="M9 4l2.500-3L14 4z" fill={BLUE} />
          </Svg>
        </Tool>
        <Tool label="减小字号">
          <Svg w={12} h={16}>
            <text x="0" y="14" fontSize="12" fill="#555" style={plain}>A</text>
            <path d="M8 1h5l-2.500 3z" fill={BLUE} />
          </Svg>
        </Tool>
        <Tool label="会计数字格式" width="w-5">
          <Svg w={18} h={16}>
            <path d="M1 1.500h14v7H1z" stroke={BLUE} strokeWidth="2" />
            <circle cx="8" cy="5" r="2" fill={BLUE} />
            <path d="M8 7h8v9H4v-5h4z" fill="#fff" />
            <ellipse cx="12" cy="8.500" rx="3.500" ry="1.500" fill={TAN} />
            <ellipse cx="12" cy="11.500" rx="3.500" ry="1.500" fill={TAN} />
            <ellipse cx="7" cy="11.500" rx="3" ry="1.200" fill={TAN} />
            <ellipse cx="8" cy="14.500" rx="3.500" ry="1.200" fill={TAN} />
          </Svg>
        </Tool>
        <Tool label="更多会计格式" width="w-3"><Caret /></Tool>
        <Tool label="百分比样式" width="w-6"><span className="text-base">%</span></Tool>
        <Tool label="千位分隔样式" width="w-5">
          <Svg w={6} h={9}>
            <path d="M1 1h4v3c0 2-1 3-4 4l2-4H1z" fill="#555" />
          </Svg>
        </Tool>
        <Tool label="合并后居中">
          <Svg w={16} h={16}>
            <path d="M.5.5h14v15H.5zM.5 4.500h14M.5 11.500h14M7.500.5v4M7.500 11.500v4" stroke={GRAY} />
            <path d="M3 8h9M5 6L3 8l2 2M10 6l2 2-2 2" stroke={BLUE} />
          </Svg>
        </Tool>
      </div>
      <div className="flex">
        <Tool label="加粗"><span className="font-bold">B</span></Tool>
        <Tool label="倾斜"><span className="font-['Liberation_Serif',serif] text-sm font-bold italic">I</span></Tool>
        <Tool label="居中" active>
          <Svg w={14} h={12}>
            <path d="M0 .5h14M2 3.500h10M0 6.500h14M2 9.500h10" stroke="#555" />
          </Svg>
        </Tool>
        <Tool label="填充颜色">
          <Svg w={16} h={16}>
            <path d="M2 6l6-5 5 5.500-5.500 5z" fill="#fff" stroke={GRAY} />
            <path d="M6.500 6V1.500a1.500 1.500 0 0 1 3 0" stroke={GRAY} />
            <path d="M10 3c4 0 6 2 5 8-2-1-2-4-2-5z" fill={BLUE} />
            <path d="M0 12h16v4H0z" fill="#ff0" />
          </Svg>
        </Tool>
        <Tool label="更多填充颜色" width="w-3"><Caret /></Tool>
        <Tool label="字体颜色">
          <Svg w={16} h={16}>
            <text x="8" y="11" fontSize="14" textAnchor="middle" fill="#555" style={letter}>A</text>
            <path d="M0 12h16v4H0z" fill="#f00" />
          </Svg>
        </Tool>
        <Tool label="更多字体颜色" width="w-3"><Caret /></Tool>
        <Tool label="边框">
          <Svg w={14} h={14}>
            <path d="M.5 0v12M6.500 0v12M12.500 0v12M0 .5h13M0 6.500h13" stroke={GRAY} strokeDasharray="1 1" />
            <path d="M0 12.500h13" stroke={GRAY} />
          </Svg>
        </Tool>
        <Tool label="更多边框" width="w-3"><Caret /></Tool>
        <Tool label="增加小数位数">
          <Svg w={16} h={16}>
            <path d="M1 4.500h5M3.500 2L1 4.500 3.500 7" stroke={BLUE} strokeWidth="1.500" />
            <g fontSize="9" textAnchor="end" fill="#444" style={plain}>
              <text x="15" y="7">.0</text>
              <text x="15" y="15">.00</text>
            </g>
          </Svg>
        </Tool>
        <Tool label="减少小数位数">
          <Svg w={16} h={16}>
            <path d="M1 12.500h5M3.500 10L6 12.500 3.500 15" stroke={BLUE} strokeWidth="1.500" />
            <g fontSize="9" textAnchor="end" fill="#444" style={plain}>
              <text x="15" y="7">.00</text>
              <text x="15" y="15">.0</text>
            </g>
          </Svg>
        </Tool>
        <Tool label="格式刷" width="w-6">
          <Svg w={16} h={16}>
            <path d="M0 7l6-2 5 5-4 5c-2-1-5-4-7-8z" fill={TAN} />
            <path d="M6 4l6 6 2-2-2-3 3.500-3L14 .5 10 4 8 2z" fill={GRAY} />
          </Svg>
        </Tool>
      </div>
    </div>
  );
}

export default function App() {
  return (
    <div className="relative flex h-screen flex-col overflow-hidden font-['Open_Sans','Noto_Sans_CJK_SC',sans-serif] text-xs">
      <TitleBar />
      <Ribbon />
      <NoticeBar />
      <FormulaBar />
      <Sheet />
      <ContextMenu />
      <MiniToolbar />
    </div>
  );
}
